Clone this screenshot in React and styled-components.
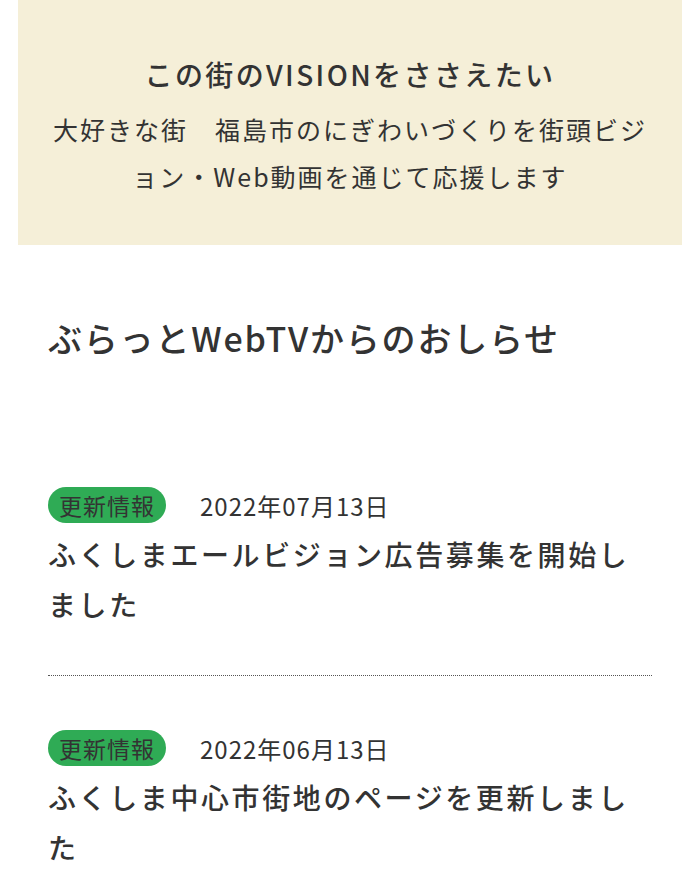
import React from 'react'
import styled, { createGlobalStyle } from 'styled-components'

const GlobalStyle = createGlobalStyle`
    body {
        margin: 0;
        background: #ffffff;
        font-family: "Noto Sans CJK JP", "Noto Sans", sans-serif;
        color: #333333;
    }
`

const Page = styled.div`
    width: 700px;
`

const VisionBox = styled.section`
    margin: 0 18px;
    height: 245px;
    box-sizing: border-box;
    padding-top: 52px;
    background-color: #f5efd8;
    text-align: center;
`

const VisionTitle = styled.h2`
    margin: 0;
    font-size: 28px;
    font-weight: 500;
    line-height: 44px;
    letter-spacing: 2.4px;
    color: #333;
`

const VisionText = styled.p`
    margin: 10px 0 0;
    padding: 0 28px;
    font-size: 25px;
    font-weight: 400;
    line-height: 47px;
    letter-spacing: 2px;
    color: #333;
`

const News = styled.section`
    padding: 70px 48px 0;
`

const NewsHeading = styled.h2`
    margin: 0;
    font-size: 34px;
    font-weight: 500;
    line-height: 46px;
    letter-spacing: 1.8px;
    color: #333;
`

const NewsList = styled.ul`
    list-style: none;
    margin: 0;
    padding: 0;
    margin-top: 126px;
`

const NewsItem = styled.li`
    padding-bottom: ${props => props.last ? '0' : '46px'};
    margin-bottom: ${props => props.last ? '0' : '54px'};
    border-bottom: ${props => props.last ? 'none' : '1px dotted #555'};
`

const Meta = styled.div`
    display: flex;
    align-items: center;
    gap: 34px;
`

const Badge = styled.span`
    display: inline-flex;
    align-items: center;
    justify-content: center;
    width: 118px;
    height: 36px;
    border-radius: 18px;
    background-color: #2fab55;
    font-size: 23px;
    letter-spacing: 1px;
    color: #333;
`

const DateText = styled.span`
    font-size: 24px;
    letter-spacing: 1px;
    color: #333;
`

const ItemTitle = styled.p`
    margin: 6px 0 0;
    font-size: 28px;
    font-weight: 500;
    line-height: 50px;
    letter-spacing: 2.6px;
    color: #333;
`

const items = [
    { date: '2022年07月13日', title: 'ふくしまエールビジョン広告募集を開始しました' },
    { date: '2022年06月13日', title: 'ふくしま中心市街地のページを更新しました' },
]

export default function App() {
    return (
        <>
            <GlobalStyle />
            <Page>
                <VisionBox>
                    <VisionTitle>この街のVISIONをささえたい</VisionTitle>
                    <VisionText>大好きな街　福島市のにぎわいづくりを街頭ビジョン・Web動画を通じて応援します</VisionText>
                </VisionBox>
                <News>
                    <NewsHeading>ぶらっとWebTVからのおしらせ</NewsHeading>
                    <NewsList>
                        {items.map((item, i) => (
                            <NewsItem key={i} last={i === items.length - 1}>
                                <Meta>
                                    <Badge>更新情報</Badge>
                                    <DateText>{item.date}</DateText>
                                </Meta>
                                <ItemTitle>{item.title}</ItemTitle>
                            </NewsItem>
                        ))}
                    </NewsList>
                </News>
            </Page>
        </>
    )
}
